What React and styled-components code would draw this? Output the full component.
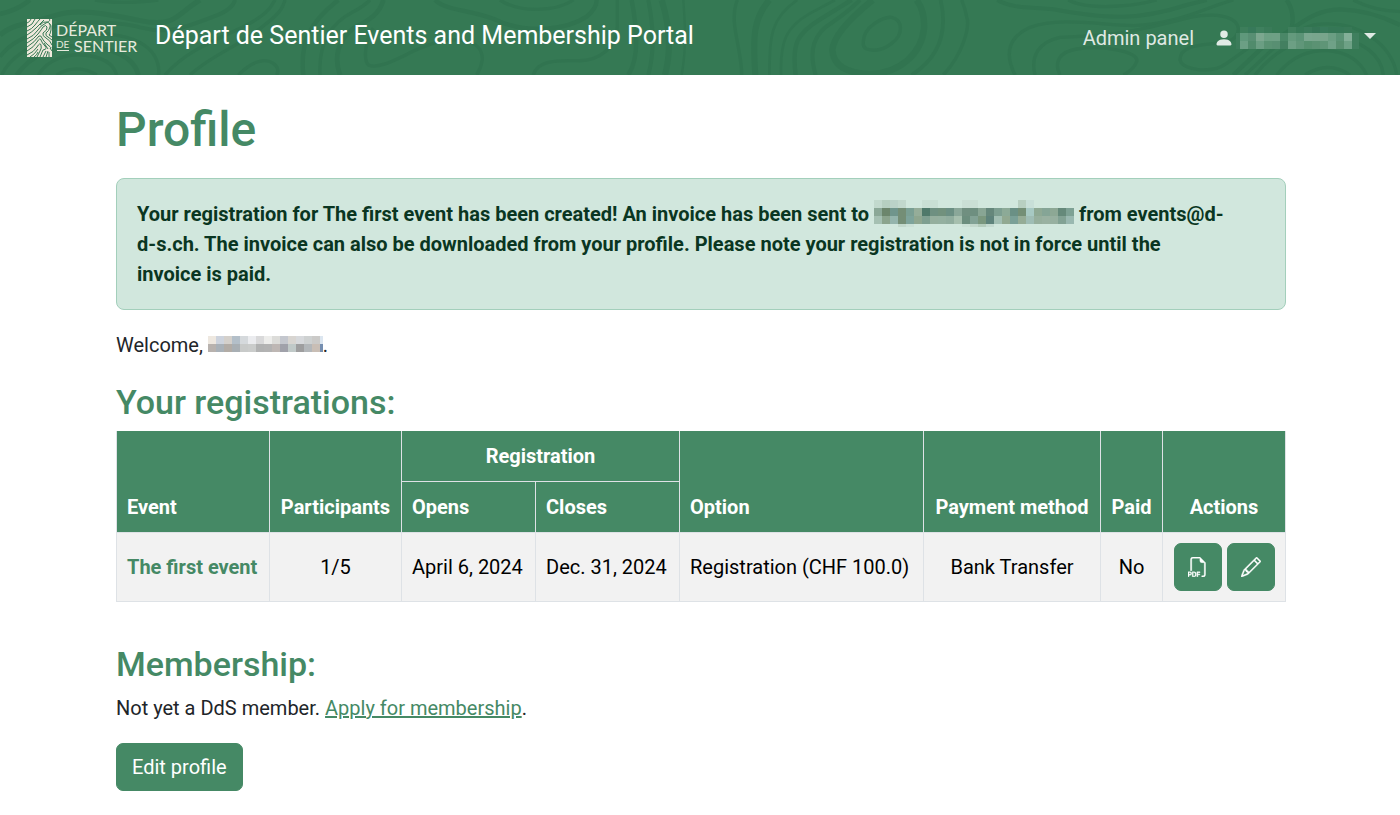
import React from "react";
import styled, { createGlobalStyle } from "styled-components";
import { BsPersonFill, BsFiletypePdf, BsPencil } from "react-icons/bs";

const GlobalStyle = createGlobalStyle`
  *, *::before, *::after { box-sizing: border-box; }
  body {
    margin: 0;
    background: #fff;
    color: #212529;
    font-family: Roboto, "Liberation Sans", sans-serif;
    font-size: 20px;
    line-height: 30px;
  }
`;

const Header = styled.header`
  position: relative;
  display: flex;
  align-items: center;
  justify-content: space-between;
  min-height: 75px;
  padding: 0 24px 0 26px;
  background: #357954;
  overflow: hidden;
`;

const ContourArt = styled.svg`
  position: absolute;
  inset: 0;
  width: 100%;
  height: 100%;
`;

const Brand = styled.a`
  position: relative;
  display: flex;
  align-items: center;
  gap: 15px;
  color: #fff;
  font-size: 25px;
  text-decoration: none;
`;

const BrandName = styled.span`
  padding-bottom: 4px;
`;

const Nav = styled.nav`
  position: relative;
  display: flex;
  align-items: center;
  gap: 20px;
`;

const NavLink = styled.a`
  color: rgba(255, 255, 255, 0.85);
  text-decoration: none;
`;

const UserMenu = styled.button`
  display: flex;
  align-items: center;
  gap: 2px;
  padding: 0;
  border: 0;
  background: none;
  color: rgba(255, 255, 255, 0.85);
  font: inherit;
`;

const Caret = styled.span`
  margin-left: 3px;
  margin-bottom: 4px;
  border: 6px solid transparent;
  border-top-color: currentColor;
  border-bottom: 0;
`;

const Main = styled.main`
  max-width: 1200px;
  margin: 0 auto;
  padding: 25px 14px 25px 16px;
`;

const PageTitle = styled.h1`
  margin: 0 0 18px;
  color: #458965;
  font-size: 48px;
  font-weight: 500;
  line-height: 60px;
`;

const SectionTitle = styled.h2`
  margin: 0 0 7px;
  color: #458965;
  font-size: 34px;
  font-weight: 500;
  line-height: 44px;
`;

const Alert = styled.div`
  margin-bottom: 20px;
  padding: 20px 60px 20px 20px;
  border: 1px solid #a3cfbb;
  border-radius: 8px;
  background: #d1e7dd;
  color: #0a3622;
  font-weight: 700;
`;

const Paragraph = styled.p`
  margin: 0 0 20px;
`;

const TextLink = styled.a`
  color: #458965;
`;

const EventLink = styled(TextLink)`
  font-weight: 700;
  text-decoration: none;
`;

const Table = styled.table`
  width: 100%;
  margin-bottom: 40px;
  border-collapse: collapse;
  color: #000;
`;

const Col = styled.col`
  width: ${(p) => p.$width}px;
`;

const HeadCell = styled.th`
  padding: 10px;
  border: 1px solid #dee2e6;
  border-top-width: ${(p) => (p.$inner ? "1px" : "0")};
  background: #458965;
  color: #fff;
  font-weight: 700;
  text-align: ${(p) => (p.$center ? "center" : "left")};
  vertical-align: bottom;
  white-space: nowrap;
`;

const Cell = styled.td`
  padding: 10px;
  border: 1px solid #dee2e6;
  background: #f2f2f2;
  text-align: ${(p) => (p.$center ? "center" : "left")};
  vertical-align: middle;
  white-space: nowrap;
`;

const Actions = styled.div`
  display: flex;
  justify-content: center;
  gap: 5px;
`;

const Button = styled.button`
  padding: 8px 15px;
  border: 1px solid #458965;
  border-radius: 7px;
  background: #458965;
  color: #fff;
  font: inherit;
`;

const IconButton = styled(Button)`
  display: grid;
  place-items: center;
  width: 48px;
  height: 48px;
  padding: 0;

  svg {
    stroke-width: 0.3;
  }
`;

const MosaicSvg = styled.svg`
  display: inline-block;
  flex: none;
  vertical-align: ${(p) => p.$drop}px;
`;

function Mosaic({ rows, heights, widths, drop = 0 }) {
  const total = (list) => list.reduce((a, b) => a + b, 0);
  return (
    <MosaicSvg
      $drop={drop}
      width={total(widths)}
      height={total(heights)}
      shapeRendering="crispEdges"
      aria-hidden="true"
    >
      {rows.map((row, r) =>
        row.split(" ").map((fill, c) =>
          fill === "-" ? null : (
            <rect
              key={`${r}-${c}`}
              x={total(widths.slice(0, c))}
              y={total(heights.slice(0, r))}
              width={widths[c]}
              height={heights[r]}
              fill={`#${fill}`}
            />
          )
        )
      )}
    </MosaicSvg>
  );
}

const EMAIL_ROWS = [
  "c2d9cd b6cfc0 bbd2c8 c2d8cd - - c9dfd4 c9dfd4 - - - cadfd5 cadfd5 - - - - - b8cfc1 c8dfd8 - - - - -",
  "8ba897 6c866c 70958c 748e76 7a9f93 95ad99 4f796a 6e9081 71917d 6b8f83 8aa799 708f80 6e8f80 88a594 65877b 7d9f91 8caa97 6a9085 748f76 a7c9c3 8ea994 85a596 8da895 65897a 7da194",
  "a5c0b2 8ba48d 94b4ac 748e76 7da39a 8ea68f 7e9f90 95af9e 94b0a0 90ad9e a6bfae 6c8e7e 82a295 7a977e 5e837b a2bfb3 91a991 7aa097 95ac96 9fbdb5 96af9d 99b1a1 97b0a0 82a294 99b8b0",
  "- - - c2d8cc cae0d6 - - - - - - cae0d5 c3d8cc b5cdbd c4dad0 - - - - - - - - - -",
];

const NAME_ROWS = [
  "eee8e0 cdd3dd d4d0cb b3bfc9 d5d9dc ebecef d9d9da ededeb dcdcd9 c4c7ce d8d5d1 d7d9dc ced1d1 cbcac8 dce6f0",
  "b8b2ae a9b1b8 b2aca6 a8afb4 c8cac9 cacccb b1b2b2 b3b3b3 beb7b4 a0a1aa c0c9c8 9e9e9f b3b7ba c9beb5 758eb0",
];

const USER_ROWS = [
  "- 3d7e5b 37795a 3f805e 3a7b59 - - 3e7e5c 367856 3a7a5a 357556 37795a 357756 357756 377856 -",
  "3b7c5a 5f987b 588f73 7ca78f 6da084 6ea085 4a8767 649a7d 5c9477 7aa78f 79a68d 78a58c 6b9e83 5b9376 83af98 3f7f5e",
  "3b7c5a 6b9f84 518b6c 6b9e83 5a9273 588f72 437f60 6c9f84 609679 56906f 5b9273 5f9577 6fa187 588f70 6ea186 3f7f5e",
];

const repeat = (value, count) => Array(count).fill(value);

function Contours() {
  return (
    <ContourArt viewBox="0 0 4200 225" preserveAspectRatio="xMidYMin slice" aria-hidden="true">
      <g fill="none" stroke="#317450" strokeWidth="10">
        <path d="M0 42 Q50 32 90 0" strokeWidth="14" />
        <path d="M285 0 Q360 14 475 0" />
        <path d="M0 105 C40 70 110 65 170 45 S310 40 420 62 S530 40 600 0" strokeWidth="15" />
        <path d="M0 170 C40 115 100 105 160 80 S380 70 420 82 C510 105 560 80 640 50 C680 36 700 20 705 0" strokeWidth="12" />
        <path d="M5 225 C30 170 90 140 150 115 C260 90 420 90 465 170 Q480 200 475 225" />
        <path d="M50 225 C90 170 150 140 230 138 C340 138 405 175 415 225" strokeWidth="14" />
        <path d="M115 225 C140 180 200 160 250 165 C310 170 340 190 350 225" />
        <path d="M170 225 Q230 188 290 225" />
        <path d="M495 225 C560 150 650 120 730 80 C790 50 810 30 825 0" />
        <path d="M570 225 C640 160 720 140 800 70 C850 30 850 15 855 0" />
        <path d="M715 225 C750 190 790 170 820 190 Q840 205 830 225" />
        <path d="M910 225 C900 130 925 70 1015 0" strokeWidth="13" />
        <path d="M960 225 C955 130 990 70 1060 35 Q1090 20 1110 0" />
        <path d="M1020 225 C1000 170 1015 120 1060 85 C1110 60 1140 40 1150 0" strokeWidth="14" />
        <path d="M1120 85 C1095 120 1090 180 1105 195 C1140 210 1200 170 1260 145 C1350 105 1450 110 1447 180 Q1443 205 1430 225" />
        <path d="M1305 0 C1340 35 1430 30 1500 65 C1590 100 1700 90 1760 50 Q1790 25 1790 0" strokeWidth="13" />
        <path d="M1500 0 C1560 40 1670 35 1720 0" />
        <path d="M1600 225 C1610 185 1660 180 1730 182 C1800 185 1850 140 1852 80 V0" />
        <path d="M1885 225 C1920 170 1910 80 1895 0" strokeWidth="13" />
        <path d="M1945 225 C1965 150 1960 80 1945 0" strokeWidth="12" />
        <path d="M1995 225 C2015 150 2010 80 1985 0" strokeWidth="18" />
        <path d="M2045 225 C2060 140 2055 70 2050 0" strokeWidth="7" />
        <path d="M2225 225 C2225 140 2185 70 2212 0" />
        <path d="M2266 225 C2258 110 2260 55 2308 0" strokeWidth="18" />
        <path d="M2308 225 C2310 110 2310 55 2392 0" strokeWidth="8" />
        <path d="M2343 225 C2340 120 2360 80 2430 40 L2505 0" strokeWidth="8" />
        <path d="M2387 225 C2375 130 2390 100 2465 55 L2555 0" strokeWidth="13" />
        <path d="M2447 225 C2425 150 2440 100 2500 65 Q2550 30 2580 0" strokeWidth="12" />
        <path d="M2618 0 C2550 55 2500 110 2497 150 C2500 190 2530 220 2610 222 C2700 220 2765 160 2772 85 Q2775 35 2750 0" strokeWidth="19" />
        <path d="M2590 125 C2590 80 2650 50 2675 52 C2710 60 2710 105 2675 130 C2650 150 2625 155 2600 147 Q2588 142 2590 125 Z" />
        <path d="M2735 225 C2830 165 2840 80 2822 0" strokeWidth="11" />
        <path d="M2830 225 C2890 160 2910 80 2900 50 Q2895 25 2885 0" />
        <path d="M2992 0 C3040 28 3100 20 3160 28 C3330 60 3420 60 3560 15 L3620 0" strokeWidth="12" />
        <path d="M3045 225 C3010 155 3030 110 3090 82 C3180 50 3300 75 3400 77 C3540 70 3610 25 3700 0" />
        <path d="M3105 225 C3090 165 3120 125 3180 112 C3360 105 3400 95 3570 52 C3690 30 3730 70 3710 105 C3690 150 3540 110 3540 180 C3550 215 3640 220 3680 190 L3800 105" />
        <path d="M3205 0 C3260 30 3390 22 3470 0" />
        <path d="M3180 225 C3160 185 3180 155 3230 147 C3310 135 3420 155 3410 185 Q3400 210 3370 225" />
        <path d="M3860 0 Q3885 35 3875 85" strokeWidth="13" />
        <path d="M3700 225 L3800 130 C3880 100 3920 30 4020 28 Q4110 30 4200 75" strokeWidth="13" />
        <path d="M3735 225 C3820 150 3850 100 3940 75 C4080 55 4180 140 4190 225" />
        <path d="M3765 225 C3840 130 3920 110 3990 112 C4090 115 4145 170 4150 225" />
        <path d="M3830 225 C3880 165 3930 150 3985 152 Q4070 160 4100 225" />
        <path d="M3915 225 Q3985 180 4050 225" />
        <path d="M4060 0 Q4120 32 4200 35" />
      </g>
    </ContourArt>
  );
}

function Logo() {
  return (
    <svg width="114" height="40" viewBox="0 0 114 40" role="img" aria-label="Départ de Sentier">
      <rect x="1" y="1" width="25" height="38" fill="#efe9dc" />
      <g fill="none" stroke="#357954" strokeWidth="1">
        <path d="M1 5Q4 4 5 1M1 9Q7 7 9 1M1 13Q6 11 9 7T14 1M1 17Q6 14 10 10T18 2M1 21Q8 18 12 12Q14 8 20 5T23 1" />
        <path d="M1 25Q8 21 12 16T17 9Q20 6 21 9T17 15Q16 18 20 20T26 27" />
        <path d="M14 7Q17 3 21 4T24 9T20 15Q19 18 22 19L26 22M23 5Q26 7 25 12T23 17L26 19" />
        <path d="M1 29Q9 24 13 18Q15 17 16 20T22 27T24 30L26 33M1 33Q8 29 11 24T15 22T19 28T17 32L14 39M1 37Q8 34 11 29T15 27T14 33L11 39" />
        <path d="M4 39Q9 36 12 31M8 39Q11 37 12 34M17 39L20 33M20 39L22 33M23 39V34M18 25L22 31" />
      </g>
      <g fill="#e6eadd" fontFamily="Lato, sans-serif" fontWeight="400">
        <text x="30" y="18" fontSize="16">DÉPART</text>
        <text x="30" y="30" fontSize="10">DE</text>
        <text x="48" y="34" fontSize="16">SENTIER</text>
      </g>
      <rect x="31" y="32" width="12" height="1" fill="#e6eadd" />
    </svg>
  );
}

export default function App() {
  return (
    <>
      <GlobalStyle />
      <Header>
        <Contours />
        <Brand href="#">
          <Logo />
          <BrandName>Départ de Sentier Events and Membership Portal</BrandName>
        </Brand>
        <Nav>
          <NavLink href="#admin">Admin panel</NavLink>
          <UserMenu type="button" aria-label="User menu">
            <BsPersonFill size={20} />
            <Mosaic rows={USER_ROWS} heights={[6, 8, 8]} widths={[4, ...repeat(8, 14), 7]} />
            <Caret />
          </UserMenu>
        </Nav>
      </Header>
      <Main>
        <PageTitle>Profile</PageTitle>
        <Alert role="alert">
          Your registration for The first event has been created! An invoice has been sent to{" "}
          <Mosaic rows={EMAIL_ROWS} heights={[8, 8, 8, 3]} widths={repeat(8, 25)} drop={-6} /> from
          events@d-d-s.ch. The invoice can also be downloaded from your profile. Please note your
          registration is not in force until the invoice is paid.
        </Alert>
        <Paragraph>
          Welcome, <Mosaic rows={NAME_ROWS} heights={[8, 8]} widths={[...repeat(8, 14), 3]} />.
        </Paragraph>

        <SectionTitle>Your registrations:</SectionTitle>
        <Table>
          <colgroup>
            {[153, 132, 134, 144, 244, 177, 62, 123].map((width, i) => (
              <Col key={i} $width={width} />
            ))}
          </colgroup>
          <thead>
            <tr>
              <HeadCell rowSpan={2}>Event</HeadCell>
              <HeadCell rowSpan={2} $center>Participants</HeadCell>
              <HeadCell colSpan={2} $center>Registration</HeadCell>
              <HeadCell rowSpan={2}>Option</HeadCell>
              <HeadCell rowSpan={2} $center>Payment method</HeadCell>
              <HeadCell rowSpan={2} $center>Paid</HeadCell>
              <HeadCell rowSpan={2} $center>Actions</HeadCell>
            </tr>
            <tr>
              <HeadCell $inner>Opens</HeadCell>
              <HeadCell $inner>Closes</HeadCell>
            </tr>
          </thead>
          <tbody>
            <tr>
              <Cell><EventLink href="#event">The first event</EventLink></Cell>
              <Cell $center>1/5</Cell>
              <Cell>April 6, 2024</Cell>
              <Cell>Dec. 31, 2024</Cell>
              <Cell>Registration (CHF 100.0)</Cell>
              <Cell $center>Bank Transfer</Cell>
              <Cell $center>No</Cell>
              <Cell>
                <Actions>
                  <IconButton type="button" aria-label="Download invoice">
                    <BsFiletypePdf size={20} strokeWidth={0.3} />
                  </IconButton>
                  <IconButton type="button" aria-label="Edit registration">
                    <BsPencil size={20} strokeWidth={0.3} />
                  </IconButton>
                </Actions>
              </Cell>
            </tr>
          </tbody>
        </Table>

        <SectionTitle>Membership:</SectionTitle>
        <Paragraph>
          Not yet a DdS member. <TextLink href="#membership">Apply for membership</TextLink>.
        </Paragraph>
        <Button type="button">Edit profile</Button>
      </Main>
    </>
  );
}
